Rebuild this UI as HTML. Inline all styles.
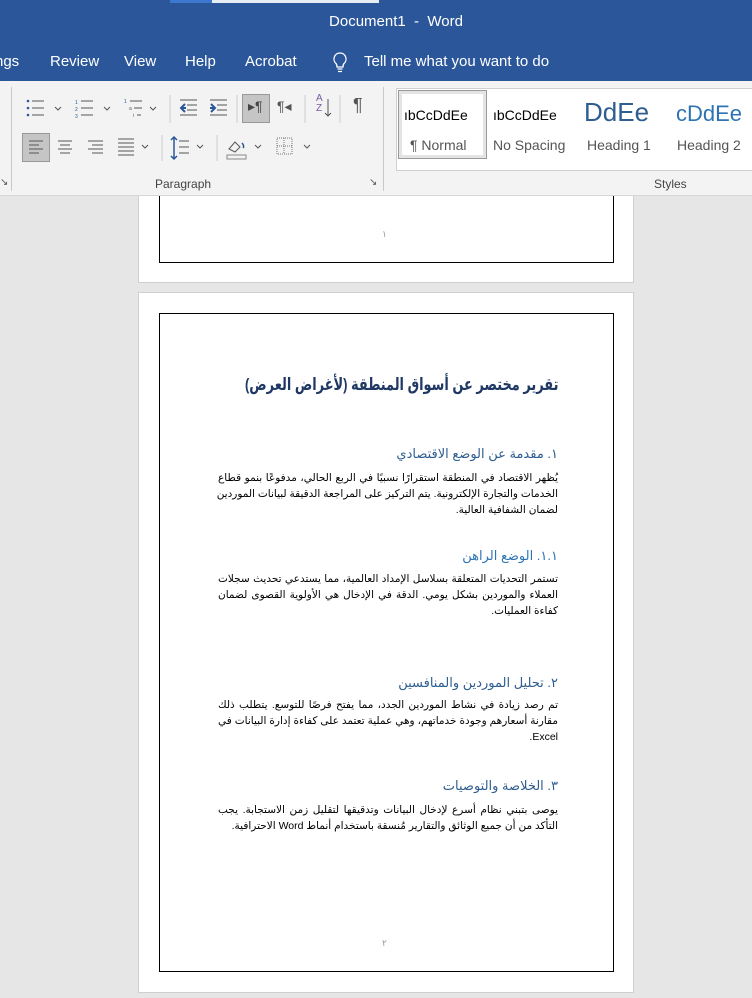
<!DOCTYPE html>
<html><head><meta charset="utf-8"><style>
*{margin:0;padding:0;box-sizing:border-box}
body{width:752px;height:998px;overflow:hidden;background:#e6e6e6;font-family:"Liberation Sans",sans-serif;position:relative}
.a{position:absolute}
#tb{left:0;top:0;width:752px;height:81px;background:#2b579a;color:#fff}
#rib{left:0;top:81px;width:752px;height:115px;background:#f3f3f3;border-bottom:1px solid #d6d6d6}
.ar{font-family:"Liberation Sans","DejaVu Sans",sans-serif;direction:rtl;text-align:right;position:absolute;right:194px;width:340px;white-space:nowrap}
.h{color:#2e5d8f;font-size:13px}
.b{font-size:10.5px;color:#000;line-height:16px}
.b div{text-align:justify;text-align-last:justify}
.b div.l{text-align-last:right}
svg{position:absolute}
</style></head><body>
<div class="a" id="tb">
 <div class="a" style="left:170px;top:0;width:42px;height:3px;background:#3c78d0"></div>
 <div class="a" style="left:212px;top:0;width:167px;height:3px;background:#e8ecf3"></div>
 <div class="a" style="left:0;top:13px;width:792px;text-align:center;font-size:15px">Document1&nbsp; - &nbsp;Word</div>
 <div class="a" style="left:-5px;top:53px;font-size:15px">ngs</div>
 <div class="a" style="left:50px;top:53px;font-size:15px">Review</div>
 <div class="a" style="left:124px;top:53px;font-size:15px">View</div>
 <div class="a" style="left:185px;top:53px;font-size:15px">Help</div>
 <div class="a" style="left:245px;top:53px;font-size:15px">Acrobat</div>
 <svg style="left:331px;top:51px" width="18" height="22"><path d="M9 2a6 6 0 0 0-4 10.5c1 1 1 2 1 3.5h6c0-1.5 0-2.5 1-3.5A6 6 0 0 0 9 2zM6.5 18h5M7 20.5h4" stroke="#fff" stroke-width="1.3" fill="none"/></svg>
 <div class="a" style="left:364px;top:53px;font-size:15px">Tell me what you want to do</div>
</div>
<div class="a" id="rib">
 <div class="a" style="left:11px;top:6px;width:1px;height:104px;background:#c8c8c8"></div>
 <div class="a" style="left:383px;top:6px;width:1px;height:104px;background:#c8c8c8"></div>
 <div class="a" style="left:242px;top:13px;width:28px;height:29px;background:#c5c5c5;border:1px solid #999"></div>
 <div class="a" style="left:22px;top:52px;width:28px;height:29px;background:#c5c5c5;border:1px solid #999"></div>
 <svg style="left:0;top:0" width="384" height="115" fill="none" stroke="#555" stroke-width="1">
  <circle cx="28" cy="20" r="1.3" fill="#2b579a" stroke="none"/><circle cx="28" cy="27" r="1.3" fill="#2b579a" stroke="none"/><circle cx="28" cy="34" r="1.3" fill="#2b579a" stroke="none"/>
  <path d="M32 20h12M32 27h12M32 34h12"/><path d="M55 26l3 3 3-3"/>
  <text x="75" y="23" font-size="5" fill="#2b579a" stroke="none">1</text><text x="75" y="30" font-size="5" fill="#2b579a" stroke="none">2</text><text x="75" y="37" font-size="5" fill="#2b579a" stroke="none">3</text>
  <path d="M81 20h12M81 27h12M81 34h12"/><path d="M104 26l3 3 3-3"/>
  <text x="124" y="22" font-size="5" fill="#2b579a" stroke="none">1</text><text x="129" y="29" font-size="5" fill="#555" stroke="none">a</text><text x="133" y="36" font-size="5" fill="#555" stroke="none">i</text>
  <path d="M130 20h12M134 27h8M137 34h4"/><path d="M150 26l3 3 3-3"/>
  <path d="M170 14v28M237 14v28M305 14v28M340 14v28" stroke="#ccc"/>
  <path d="M180 19h17M187 24h10M187 29h10M180 34h17"/><path d="M185 23l-4 4 4 4M181 27h5" stroke="#2b579a" stroke-width="2"/>
  <path d="M210 19h17M217 24h10M217 29h10M210 34h17"/><path d="M211 23l4 4-4 4M210 27h5" stroke="#2b579a" stroke-width="2"/>
  <path d="M328 18v17M325 32l3 3 3-3"/>
  <path d="M29 60h14M29 64h10M29 68h14M29 72h10"/>
  <path d="M58 60h14M60 64h10M58 68h14M60 72h10"/>
  <path d="M88 60h15M92 64h11M88 68h15M92 72h11"/>
  <path d="M118 58h16M118 62h16M118 66h16M118 70h16M118 74h16"/><path d="M142 64l3 3 3-3"/>
  <path d="M179 60h10M179 66h10M179 72h10"/><path d="M174 56v22M171 59l3-3 3 3M171 75l3 3 3-3" stroke="#2b579a" stroke-width="1.5"/><path d="M197 64l3 3 3-3"/>
  <path d="M162 54v26M217 54v26" stroke="#ccc"/>
  <path d="M229 68l6-7 5 5-5 5z"/><path d="M242 62c2 2 2 4 1 5" stroke="#2b579a" stroke-width="1.5"/><path d="M227 74h19v4h-19z" stroke="#888"/><path d="M255 64l3 3 3-3"/>
  <path d="M277 57h15v16h-15zM284 57v16M277 65h15" stroke-dasharray="1 1" stroke="#777"/><path d="M304 64l3 3 3-3"/>
 </svg>
 <div class="a" style="left:248px;top:17px;font-size:14px;color:#444">▸¶</div>
 <div class="a" style="left:277px;top:17px;font-size:14px;color:#555">¶◂</div>
 <div class="a" style="left:316px;top:13px;font-size:10px;color:#7a5aa5;line-height:10px">A<br>Z</div>
 <div class="a" style="left:353px;top:14px;font-size:18px;color:#555">¶</div>
 <div class="a" style="left:155px;top:96px;font-size:12px;color:#444">Paragraph</div>
 <div class="a" style="left:654px;top:96px;font-size:12px;color:#444">Styles</div>
 <div class="a" style="left:369px;top:96px;font-size:10px;color:#555">↘</div>
 <div class="a" style="left:0;top:96px;font-size:10px;color:#555">↘</div>
 <div class="a" style="left:396px;top:7px;width:356px;height:83px;background:#fff;border:1px solid #d0d0d0;border-right:none"></div>
 <div class="a" style="left:398px;top:9px;width:89px;height:69px;border:1px solid #9a9a9a;background:#fff;box-shadow:inset 0 0 0 3px #e4e4e4"></div>
 <div class="a" style="left:404px;top:26px;font-size:14px;color:#000">ıbCcDdEe</div>
 <div class="a" style="left:410px;top:56px;font-size:14px;color:#555">¶ Normal</div>
 <div class="a" style="left:493px;top:26px;font-size:14px;color:#000">ıbCcDdEe</div>
 <div class="a" style="left:493px;top:56px;font-size:14px;color:#555">No Spacing</div>
 <div class="a" style="left:584px;top:16px;font-size:26px;color:#2e5d8f">DdEe</div>
 <div class="a" style="left:587px;top:56px;font-size:14px;color:#555">Heading 1</div>
 <div class="a" style="left:676px;top:20px;font-size:22px;color:#2e74b5">cDdEe</div>
 <div class="a" style="left:677px;top:56px;font-size:14px;color:#555">Heading 2</div>
</div>
<div class="a" style="left:138px;top:196px;width:496px;height:87px;background:#fff;border:1px solid #cfcfcf;border-top:none"></div>
<div class="a" style="left:159px;top:196px;width:455px;height:67px;border:1px solid #000;border-top:none"></div>
<div class="a" style="left:382px;top:229px;font-size:9px;color:#999">١</div>
<div class="a" style="left:138px;top:292px;width:496px;height:701px;background:#fff;border:1px solid #cfcfcf"></div>
<div class="a" style="left:159px;top:313px;width:455px;height:659px;border:1px solid #000"></div>
<div class="a" style="left:382px;top:938px;font-size:9px;color:#999">٢</div>

<div class="ar" style="top:375px;font-size:17px;color:#1f3864;font-weight:bold;transform:scaleX(0.76);transform-origin:right center;width:auto">تقرير مختصر عن أسواق المنطقة (لأغراض العرض)</div>

<div class="ar h" style="top:446px">١. مقدمة عن الوضع الاقتصادي</div>
<div class="ar b" style="top:470px"><div>يُظهر الاقتصاد في المنطقة استقرارًا نسبيًا في الربع الحالي، مدفوعًا بنمو قطاع</div><div>الخدمات والتجارة الإلكترونية. يتم التركيز على المراجعة الدقيقة لبيانات الموردين</div><div class="l">لضمان الشفافية العالية.</div></div>

<div class="ar h" style="top:548px;color:#2e74b5">١.١. الوضع الراهن</div>
<div class="ar b" style="top:571px"><div>تستمر التحديات المتعلقة بسلاسل الإمداد العالمية، مما يستدعي تحديث سجلات</div><div>العملاء والموردين بشكل يومي. الدقة في الإدخال هي الأولوية القصوى لضمان</div><div class="l">كفاءة العمليات.</div></div>

<div class="ar h" style="top:675px">٢. تحليل الموردين والمنافسين</div>
<div class="ar b" style="top:697px"><div>تم رصد زيادة في نشاط الموردين الجدد، مما يفتح فرصًا للتوسع. يتطلب ذلك</div><div>مقارنة أسعارهم وجودة خدماتهم، وهي عملية تعتمد على كفاءة إدارة البيانات في</div><div class="l">Excel.</div></div>

<div class="ar h" style="top:778px">٣. الخلاصة والتوصيات</div>
<div class="ar b" style="top:802px"><div>يوصى بتبني نظام أسرع لإدخال البيانات وتدقيقها لتقليل زمن الاستجابة. يجب</div><div class="l">التأكد من أن جميع الوثائق والتقارير مُنسقة باستخدام أنماط Word الاحترافية.</div></div>
</body></html>
